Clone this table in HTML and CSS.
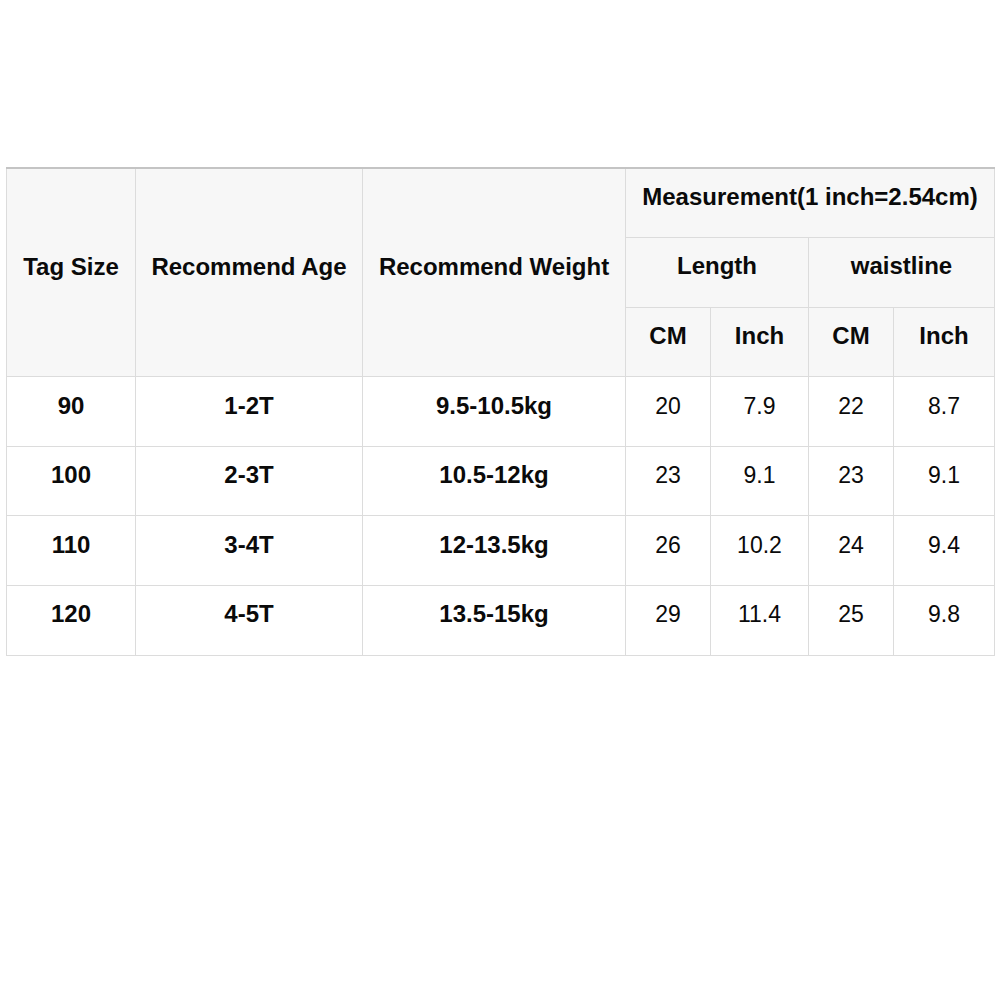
FILE: index.html
```html
<!DOCTYPE html>
<html>
<head>
<meta charset="utf-8">
<link rel="stylesheet" href="styles.css">
</head>
<body>
<div class="page">
<table class="size-table">
  <colgroup>
    <col class="c1"><col class="c2"><col class="c3"><col class="c4"><col class="c5"><col class="c6"><col class="c7">
  </colgroup>
  <thead>
    <tr class="r-top">
      <th rowspan="3">Tag Size</th>
      <th rowspan="3">Recommend Age</th>
      <th rowspan="3">Recommend Weight</th>
      <th colspan="4">Measurement(1 inch=2.54cm)</th>
    </tr>
    <tr>
      <th colspan="2">Length</th>
      <th colspan="2">waistline</th>
    </tr>
    <tr>
      <th>CM</th><th>Inch</th><th>CM</th><th>Inch</th>
    </tr>
  </thead>
  <tbody>
    <tr><td class="b">90</td><td class="b">1-2T</td><td class="b">9.5-10.5kg</td><td>20</td><td>7.9</td><td>22</td><td>8.7</td></tr>
    <tr><td class="b">100</td><td class="b">2-3T</td><td class="b">10.5-12kg</td><td>23</td><td>9.1</td><td>23</td><td>9.1</td></tr>
    <tr><td class="b">110</td><td class="b">3-4T</td><td class="b">12-13.5kg</td><td>26</td><td>10.2</td><td>24</td><td>9.4</td></tr>
    <tr><td class="b">120</td><td class="b">4-5T</td><td class="b">13.5-15kg</td><td>29</td><td>11.4</td><td>25</td><td>9.8</td></tr>
  </tbody>
</table>
</div>
</body>
</html>
```
FILE: styles.css
```css
html, body {
  margin: 0;
  padding: 0;
  background: #ffffff;
}
.page {
  padding: 167px 0 0 6px;
}
.size-table {
  border-collapse: collapse;
  table-layout: fixed;
  width: 988px;
  font-family: "Liberation Sans", Arial, sans-serif;
  font-size: 24px;
  color: #0a0a0a;
  border-top: 2px solid #c4c4c4;
}
.c1 { width: 129px; }
.c2 { width: 227px; }
.c3 { width: 263px; }
.c4 { width: 85px; }
.c5 { width: 98px; }
.c6 { width: 85px; }
.c7 { width: 101px; }
.size-table tr {
  height: 69.6px;
}
.size-table th,
.size-table td {
  border: 1px solid #dcdcdc;
  text-align: center;
  vertical-align: middle;
  padding: 0 0 12px 0;
  white-space: nowrap;
  line-height: 28px;
}
.size-table .r-top th {
  border-top: 2px solid #c4c4c4;
}
.size-table th {
  background: #f7f7f7;
  font-weight: bold;
}
.size-table td {
  background: #ffffff;
  font-weight: normal;
  font-size: 23px;
}
.size-table td.b {
  font-weight: bold;
  font-size: 24px;
}
```
